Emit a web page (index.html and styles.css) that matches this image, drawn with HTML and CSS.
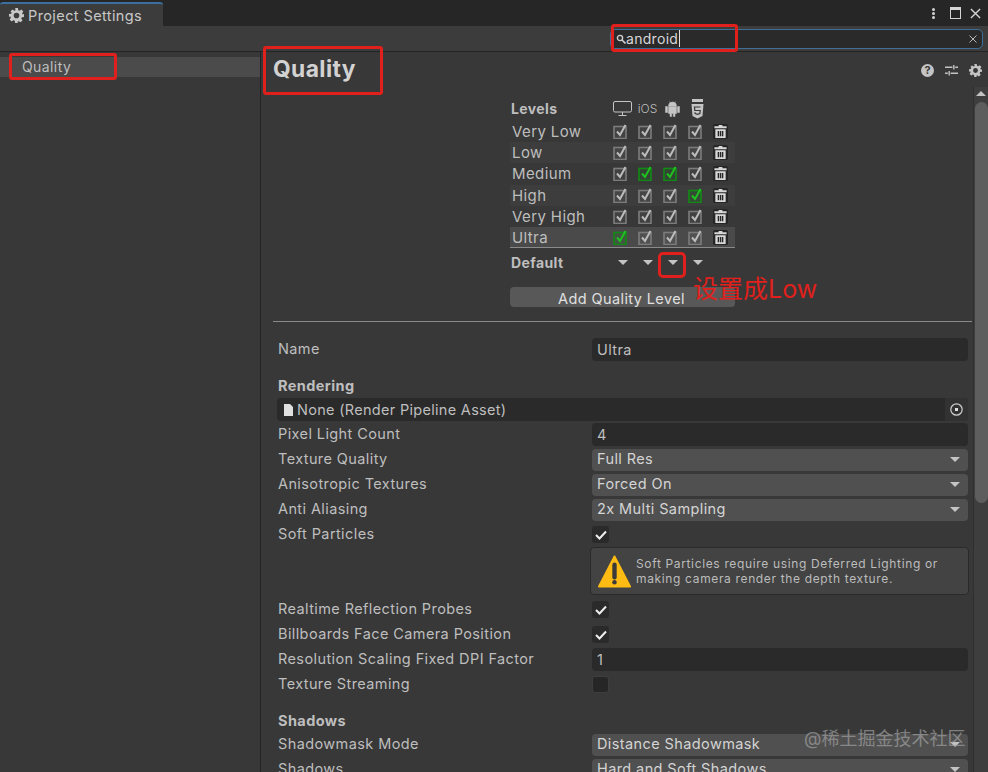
FILE: index.html
```html
<!DOCTYPE html>
<html lang="en">
<head>
    <meta charset="UTF-8">
    <meta name="viewport" content="width=device-width, initial-scale=1.0">
    <title>Project Settings</title>
    <link rel="stylesheet" href="styles.css">
</head>
<body>

<svg class="defs" width="0" height="0">
    <symbol id="tick" viewBox="0 0 15 15">
        <rect x="1" y="2.500" width="12" height="12" fill="currentColor" fill-opacity=".15" stroke="currentColor" stroke-width="1.600"/>
        <path d="M4 7.500l3 3.500L12.500 1" fill="none" stroke="var(--mark)" stroke-width="2"/>
    </symbol>
    <symbol id="trash" viewBox="0 0 16 16">
        <rect width="16" height="16" rx="2" fill="#262626"/>
        <path d="M6 1h4v1.500h4.500v2h-13v-2H6zM2.500 5.500h11V15h-11zM5 7.500v5.500h1.500V7.500zM7.300 7.500v5.500h1.500V7.500zM9.500 7.500v5.500H11V7.500z" fill="#d8d8d8" fill-rule="evenodd"/>
    </symbol>
    <symbol id="gear" viewBox="0 0 16 16">
        <path d="M6.500 0h3l.4 2.300 1.400.6L13.200 1.600l2.100 2.100-1.300 1.900.6 1.400L16 6.500v3l-2.300.4-.6 1.400 1.300 1.900-2.100 2.100-1.900-1.300-1.400.6L9.500 16h-3l-.4-2.400-1.400-.6-1.900 1.300-2.100-2.100L2 10.300l-.6-1.400L0 9.500v-3l2.300-.4.6-1.400L1.600 3.800 3.700 1.700 5.600 3 7 2.400zM8 5a3 3 0 1 0 0 6 3 3 0 0 0 0-6z" fill="currentColor" fill-rule="evenodd"/>
    </symbol>
    <symbol id="check" viewBox="0 0 12 10">
        <path d="M1 5l3.500 3.500L11 1.500" fill="none" stroke="#eee" stroke-width="2"/>
    </symbol>
</svg>

<div class="window">
    <div class="tabbar">
        <div class="tab">
            <svg class="tab-gear"><use href="#gear"/></svg>
            Project Settings
        </div>
        <div class="window-btns">
            <span class="dots"><i></i><i></i><i></i></span>
            <span class="maximize"></span>
            <svg class="close-x" viewBox="0 0 12 12"><path d="M1 1l10 10M11 1L1 11" stroke="#d4d4d4" stroke-width="1.500"/></svg>
        </div>
    </div>

    <div class="toolbar">
        <div class="search">
            <svg class="search-icon" viewBox="0 0 10 10"><circle cx="4" cy="4" r="2.600" fill="none" stroke="#d0d0d0" stroke-width="1.400"/><path d="M6 6l3.500 3.500" stroke="#d0d0d0" stroke-width="1.600"/></svg>
            <span class="search-text"><span class="caret">android</span></span>
            <svg class="search-clear" viewBox="0 0 8 8"><path d="M.5.5l7 7M7.500.5l-7 7" stroke="#b8b8b8" stroke-width="1"/></svg>
        </div>
    </div>

    <div class="body">
        <div class="sidebar">
            <div class="side-item">Quality</div>
        </div>
        <div class="main">
            <div class="title-row">
                <h1>Quality</h1>
                <div class="title-icons">
                    <span class="help">?</span>
                    <svg class="sliders" viewBox="0 0 14 14"><path d="M0 3.500h8M11 3.500h3M9.500 1v5M0 10h3M6 10h8M4.500 7.500v5" stroke="#c4c4c4" stroke-width="1.500" fill="none"/></svg>
                    <svg class="title-gear"><use href="#gear"/></svg>
                </div>
            </div>

            <div class="levels">
                <div class="levels-head">
                    <span class="levels-title">Levels</span>
                    <span class="platform">
                        <svg width="19" height="15" viewBox="0 0 19 15"><rect x=".5" y=".5" width="18" height="10.500" rx="1.500" fill="none" stroke="#c4c4c4"/><path d="M9.500 11v3M5.500 14.500h8" stroke="#c4c4c4"/></svg>
                    </span>
                    <span class="platform ios">iOS</span>
                    <span class="platform">
                        <svg width="15" height="18" viewBox="0 0 15 17"><path d="M3.500 5.500a4 4 0 0 1 8 0zM3.500 6h8v7h-1.500v3H8.300v-3H6.700v3H5v-3H3.500zM0.500 6h2v6h-2zM12.500 6h2v6h-2zM4.500 1l1.500 2M10.500 1L9 3" fill="#c4c4c4" stroke="#c4c4c4" stroke-width=".5"/></svg>
                    </span>
                    <span class="platform">
                        <svg width="13" height="20" viewBox="0 0 13 20"><path d="M1 0h11v3H1z" fill="#c4c4c4"/><path d="M.5 5h12l-1 12-5 2.500-5-2.500z" fill="#c4c4c4"/><path d="M9.500 8h-6l.3 3.500h5.400l-.3 3-2.400.8-2.400-.8-.1-1.300" fill="none" stroke="#383838" stroke-width="1.200"/></svg>
                    </span>
                </div>
                <div class="level-row">
                    <span class="level-name">Very Low</span>
                    <svg class="tick"><use href="#tick"/></svg><svg class="tick"><use href="#tick"/></svg><svg class="tick"><use href="#tick"/></svg><svg class="tick"><use href="#tick"/></svg>
                    <svg class="trash"><use href="#trash"/></svg>
                </div>
                <div class="level-row alt">
                    <span class="level-name">Low</span>
                    <svg class="tick"><use href="#tick"/></svg><svg class="tick"><use href="#tick"/></svg><svg class="tick"><use href="#tick"/></svg><svg class="tick"><use href="#tick"/></svg>
                    <svg class="trash"><use href="#trash"/></svg>
                </div>
                <div class="level-row">
                    <span class="level-name">Medium</span>
                    <svg class="tick"><use href="#tick"/></svg><svg class="tick on"><use href="#tick"/></svg><svg class="tick on"><use href="#tick"/></svg><svg class="tick"><use href="#tick"/></svg>
                    <svg class="trash"><use href="#trash"/></svg>
                </div>
                <div class="level-row alt">
                    <span class="level-name">High</span>
                    <svg class="tick"><use href="#tick"/></svg><svg class="tick"><use href="#tick"/></svg><svg class="tick"><use href="#tick"/></svg><svg class="tick on"><use href="#tick"/></svg>
                    <svg class="trash"><use href="#trash"/></svg>
                </div>
                <div class="level-row">
                    <span class="level-name">Very High</span>
                    <svg class="tick"><use href="#tick"/></svg><svg class="tick"><use href="#tick"/></svg><svg class="tick"><use href="#tick"/></svg><svg class="tick"><use href="#tick"/></svg>
                    <svg class="trash"><use href="#trash"/></svg>
                </div>
                <div class="level-row selected">
                    <span class="level-name">Ultra</span>
                    <svg class="tick on"><use href="#tick"/></svg><svg class="tick"><use href="#tick"/></svg><svg class="tick"><use href="#tick"/></svg><svg class="tick"><use href="#tick"/></svg>
                    <svg class="trash"><use href="#trash"/></svg>
                </div>
                <div class="default-row">
                    <span class="levels-title">Default</span>
                    <span class="arrow-cell"><i class="arrow"></i></span>
                    <span class="arrow-cell"><i class="arrow"></i></span>
                    <span class="arrow-cell"><i class="arrow"></i></span>
                    <span class="arrow-cell"><i class="arrow"></i></span>
                </div>
                <div class="add-btn">Add Quality Level</div>
            </div>

            <div class="divider"></div>

            <div class="form">
                <div class="row"><label>Name</label><div class="field">Ultra</div></div>
                <div class="section">Rendering</div>
                <div class="object-field">
                    <svg class="doc" viewBox="0 0 9 12"><path d="M0 0h6l3 3v9H0z" fill="#e0e0e0"/></svg>
                    None (Render Pipeline Asset)
                    <span class="picker">
                        <svg viewBox="0 0 13 13" width="13" height="13"><circle cx="6.500" cy="6.500" r="5.700" fill="none" stroke="#d0d0d0" stroke-width="1.200"/><rect x="5" y="5" width="3" height="3" fill="#e0e0e0"/></svg>
                    </span>
                </div>
                <div class="row"><label>Pixel Light Count</label><div class="field">4</div></div>
                <div class="row"><label>Texture Quality</label><div class="select"><span>Full Res</span><i class="arrow"></i></div></div>
                <div class="row"><label>Anisotropic Textures</label><div class="select"><span>Forced On</span><i class="arrow"></i></div></div>
                <div class="row"><label>Anti Aliasing</label><div class="select"><span>2x Multi Sampling</span><i class="arrow"></i></div></div>
                <div class="row"><label>Soft Particles</label><div class="check"><svg><use href="#check"/></svg></div></div>
                <div class="helpbox">
                    <svg class="warn" viewBox="0 0 34 34"><path d="M17 1.500L33 32.500H1z" fill="#fdbb14" stroke="#fdbb14" stroke-width="2" stroke-linejoin="round"/><path d="M17 10v13" stroke="#3a3a3a" stroke-width="4.500" stroke-linecap="round"/><circle cx="17" cy="28" r="2.300" fill="#3a3a3a"/></svg>
                    <p>Soft Particles require using Deferred Lighting or making camera render the depth texture.</p>
                </div>
                <div class="row"><label>Realtime Reflection Probes</label><div class="check"><svg><use href="#check"/></svg></div></div>
                <div class="row"><label>Billboards Face Camera Position</label><div class="check"><svg><use href="#check"/></svg></div></div>
                <div class="row"><label>Resolution Scaling Fixed DPI Factor</label><div class="field">1</div></div>
                <div class="row"><label>Texture Streaming</label><div class="check off"></div></div>
                <div class="section shadows">Shadows</div>
                <div class="row"><label>Shadowmask Mode</label><div class="select"><span>Distance Shadowmask</span><i class="arrow"></i></div></div>
                <div class="row"><label>Shadows</label><div class="select"><span>Hard and Soft Shadows</span><i class="arrow"></i></div></div>
            </div>
        </div>
        <div class="scrollbar">
            <i class="scroll-up"></i>
            <div class="scroll-thumb"></div>
        </div>
    </div>
</div>

<!-- red marks drawn on top of the screenshot -->
<div class="mark mark-search"></div>
<div class="mark mark-side"></div>
<div class="mark mark-title"></div>
<div class="mark mark-arrow"></div>
<div class="note">设置成Low</div>
<div class="watermark">@稀土掘金技术社区</div>

</body>
</html>
```

FILE: styles.css
```css
html, body {
    margin: 0;
    padding: 0;
    height: 772px;
    overflow: hidden;
}
body {
    font-family: Inter, "Noto Sans CJK SC", sans-serif;
    font-size: 15px;
    letter-spacing: 0.4px;
    color: #bebebe;
    background-color: #383838;
    position: relative;
}
.defs {
    position: absolute;
}
.window {
    display: flex;
    flex-direction: column;
    height: 772px;
}
.tabbar {
    height: 26px;
    flex: none;
    display: flex;
    justify-content: space-between;
    background-color: #262626;
}
.tab {
    width: 163px;
    margin-top: 2px;
    box-sizing: border-box;
    border-top: 2px solid #3a6f9f;
    border-radius: 3px 3px 0 0;
    background-color: #3c3c3c;
    display: flex;
    align-items: center;
    gap: 4px;
    padding-left: 9px;
    font-size: 14.500px;
    color: #c8c8c8;
}
.tab-gear {
    width: 15px;
    height: 15px;
    color: #c8c8c8;
}
.window-btns {
    display: flex;
    align-items: center;
    gap: 9px;
    padding-right: 7px;
}
.dots {
    display: flex;
    flex-direction: column;
    gap: 1px;
    margin-right: 6px;
}
.dots i {
    width: 3px;
    height: 3px;
    background-color: #d4d4d4;
    border-radius: 50%;
}
.maximize {
    width: 9px;
    height: 8px;
    border: 1.500px solid #d4d4d4;
    border-top-width: 3px;
}
.close-x {
    width: 11px;
    height: 11px;
}
.toolbar {
    height: 25px;
    flex: none;
    box-sizing: border-box;
    background-color: #3c3c3c;
    display: flex;
    justify-content: flex-end;
    padding: 3px 5px 0 0;
}
.search {
    width: 373px;
    height: 20px;
    box-sizing: border-box;
    background-color: #2a2a2a;
    border: 1px solid #3f6f96;
    border-radius: 5px;
    display: flex;
    align-items: center;
    padding: 0 5px 1px;
    color: #d8d8d8;
    font-size: 14px;
    letter-spacing: 0.300px;
}
.search-icon {
    width: 10px;
    height: 10px;
    flex: none;
}
.search-text {
    flex: 1;
}
.caret {
    border-right: 1px solid #e0e0e0;
    padding-right: 1px;
}
.search-clear {
    width: 8px;
    height: 8px;
}
.body {
    flex: 1;
    display: flex;
    border-top: 1px solid #232323;
    min-height: 0;
}
.sidebar {
    width: 261px;
    flex: none;
    box-sizing: border-box;
    border-right: 1px solid #232323;
    padding-top: 5px;
}
.side-item {
    height: 20px;
    line-height: 19px;
    padding-left: 22px;
    background-color: #4b4b4b;
    font-size: 14px;
}
.main {
    flex: 1;
    min-width: 0;
    padding: 0 1px 0 12px;
}
.title-row {
    height: 36px;
    display: flex;
    justify-content: space-between;
    align-items: center;
}
h1 {
    margin: -4px 0 0 0;
    font-size: 22.800px;
    font-weight: 700;
    color: #d2d2d2;
}
.title-icons {
    display: flex;
    align-items: center;
    gap: 11px;
    margin-right: -10px;
}
.help {
    width: 13px;
    height: 13px;
    border-radius: 50%;
    background-color: #c4c4c4;
    color: #383838;
    font-size: 11px;
    font-weight: 700;
    line-height: 13px;
    text-align: center;
    letter-spacing: 0;
}
.sliders {
    width: 13px;
    height: 13px;
}
.title-gear {
    width: 13px;
    height: 13px;
    color: #c4c4c4;
}
.levels {
    width: 225px;
    margin: 10px 0 0 237px;
}
.levels-head {
    height: 23px;
    display: flex;
    align-items: center;
    padding-bottom: 2px;
    box-sizing: border-box;
}
.levels-title {
    width: 100px;
    flex: none;
    padding-left: 1px;
    box-sizing: border-box;
    font-weight: 700;
    font-size: 14px;
}
.platform {
    width: 25px;
    flex: none;
    display: flex;
    justify-content: center;
}
.ios {
    font-size: 12px;
    font-weight: 300;
    letter-spacing: 0;
}
.level-row {
    height: 21.200px;
    display: flex;
    align-items: center;
    box-sizing: border-box;
    padding-left: 2px;
}
.level-row.alt {
    background-color: #3d3d3d;
}
.level-row.selected {
    background-color: #4a4a4a;
    border-bottom: 1px solid #8a8a8a;
}
.level-name {
    width: 100px;
    flex: none;
    margin-right: -4px;
}
.tick {
    --mark: #bcbcbc;
    width: 15px;
    height: 15px;
    margin: 0 5px;
    flex: none;
    color: #7c7c7c;
}
.tick.on {
    --mark: #1fc020;
    color: #128a16;
}
.trash {
    width: 15px;
    height: 15px;
    margin-left: 5px;
}
.default-row {
    height: 29px;
    display: flex;
    align-items: center;
}
.arrow-cell {
    width: 25px;
    flex: none;
    display: flex;
    justify-content: center;
}
.arrow {
    display: block;
    width: 0;
    height: 0;
    border-left: 5px solid transparent;
    border-right: 5px solid transparent;
    border-top: 5px solid #c4c4c4;
}
.add-btn {
    height: 20px;
    margin-top: 10px;
    padding-right: 2px;
    background-color: #585858;
    border-radius: 4px;
    color: #e0e0e0;
    text-align: center;
    line-height: 23px;
    font-size: 14.500px;
}
.divider {
    height: 1px;
    background-color: #8a8a8a;
    margin-top: 14px;
}
.form {
    padding: 15px 0 0 5px;
}
.row {
    height: 25px;
    display: flex;
    align-items: center;
}
.row label {
    width: 314px;
    flex: none;
    margin-top: -2px;
    font-size: 14.500px;
}
.field {
    width: 376px;
    height: 23px;
    box-sizing: border-box;
    background-color: #2a2a2a;
    border-radius: 4px;
    line-height: 24px;
    padding-left: 5px;
    font-size: 14.500px;
}
.select {
    width: 376px;
    height: 22px;
    box-sizing: border-box;
    background-color: #505050;
    border-radius: 4px;
    padding: 0 8px 0 5px;
    display: flex;
    justify-content: space-between;
    align-items: center;
    font-size: 14.500px;
    color: #d4d4d4;
}
.select span {
    margin-top: -3px;
}
.section {
    font-weight: 700;
    font-size: 14.500px;
    margin-top: 14px;
    height: 22px;
    line-height: 20px;
}
.section.shadows {
    margin-top: 14px;
    height: 21px;
}
.object-field {
    margin-left: -1px;
    width: 691px;
    height: 23px;
    box-sizing: border-box;
    background-color: #2a2a2a;
    border-radius: 4px;
    display: flex;
    align-items: center;
    gap: 4px;
    padding-left: 7px;
    margin-bottom: 1px;
    position: relative;
    font-size: 14.500px;
    letter-spacing: 0.300px;
}
.doc {
    width: 9px;
    height: 12px;
}
.picker {
    position: absolute;
    right: 0;
    top: 0;
    width: 23px;
    height: 23px;
    background-color: #323232;
    border-radius: 0 4px 4px 0;
    display: flex;
    align-items: center;
    justify-content: center;
}
.check {
    width: 17px;
    height: 17px;
    background-color: #2a2a2a;
    border-radius: 3px;
    display: flex;
    align-items: center;
    justify-content: center;
}
.check svg {
    width: 12px;
    height: 10px;
}
.check.off {
    background-color: #262626;
    border: 1px solid #3e3e3e;
    box-sizing: border-box;
}
.helpbox {
    margin: 0 0 2px 312px;
    width: 379px;
    height: 48px;
    box-sizing: border-box;
    background-color: #434343;
    border: 1px solid #2a2a2a;
    border-radius: 4px;
    display: flex;
    align-items: center;
    gap: 5px;
    padding-left: 7px;
}
.warn {
    width: 33px;
    height: 33px;
    flex: none;
}
.helpbox p {
    margin: 0;
    font-size: 12px;
    line-height: 15px;
    letter-spacing: 0.650px;
    color: #bcbcbc;
}
.scrollbar {
    width: 15px;
    flex: none;
    box-sizing: border-box;
    margin-top: 35px;
    padding-top: 4px;
    display: flex;
    flex-direction: column;
    align-items: center;
    background-color: #3e3e3e;
    border-left: 1px solid #2f2f2f;
}
.scroll-up {
    width: 0;
    height: 0;
    border-left: 5px solid transparent;
    border-right: 5px solid transparent;
    border-bottom: 5px solid #c4c4c4;
}
.scroll-thumb {
    width: 13px;
    height: 401px;
    margin-top: 6px;
    background-color: #5e5e5e;
    border-radius: 7px;
}
.mark {
    position: absolute;
    box-sizing: border-box;
    border: 3px solid #e0201c;
    border-radius: 3px;
}
.mark-search {
    left: 611px;
    top: 24px;
    width: 127px;
    height: 28px;
}
.mark-side {
    left: 9px;
    top: 53px;
    width: 108px;
    height: 27px;
}
.mark-title {
    left: 263px;
    top: 46px;
    width: 120px;
    height: 49px;
}
.mark-arrow {
    left: 658px;
    top: 252px;
    width: 28px;
    height: 26px;
    border-radius: 5px;
}
.note {
    position: absolute;
    left: 693px;
    top: 272px;
    font-size: 25px;
    line-height: 34px;
    letter-spacing: 0;
    color: #e0201c;
}
.watermark {
    position: absolute;
    left: 804px;
    top: 729px;
    font-size: 18px;
    line-height: 20px;
    letter-spacing: 0;
    color: rgba(160, 160, 160, 0.7);
}
```
